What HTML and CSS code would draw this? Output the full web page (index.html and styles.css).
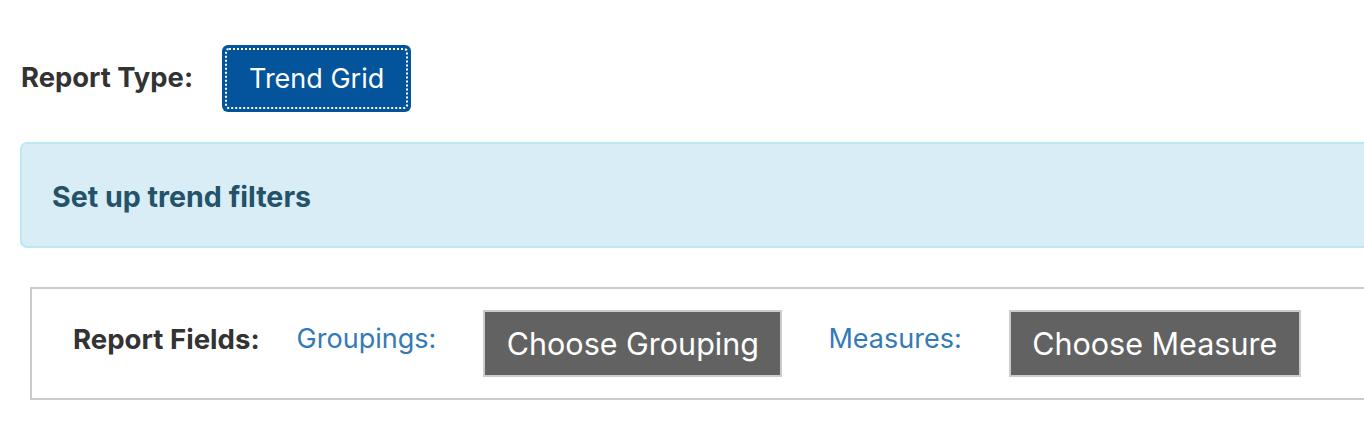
FILE: index.html
```html
<!DOCTYPE html>
<html lang="en">
<head>
<meta charset="utf-8">
<title>Report</title>
<link rel="stylesheet" href="styles.css">
</head>
<body>
<div class="page">
  <div class="type-row">
    <span class="type-label">Report Type:</span>
    <button class="type-btn"><span class="focus-ring">Trend Grid</span></button>
  </div>
  <div class="alert">
    <h3 class="alert-title">Set up trend filters</h3>
  </div>
  <div class="fields-panel">
    <span class="fields-label">Report Fields:</span>
    <a class="field-link" href="#">Groupings:</a>
    <button class="choose-btn">Choose Grouping</button>
    <a class="field-link" href="#">Measures:</a>
    <button class="choose-btn">Choose Measure</button>
  </div>
</div>
</body>
</html>
```

FILE: styles.css
```css
html, body {
  margin: 0;
  padding: 0;
  overflow: hidden;
  background: #fff;
}
body {
  font-family: Inter, "Liberation Sans", sans-serif;
  color: #333;
}
.page {
  padding: 45px 0 0 20px;
  width: 1420px;
}
.type-row {
  display: flex;
  align-items: center;
}
.type-label {
  font-size: 27.4px;
  font-weight: 700;
  color: #333;
  padding-left: 1px;
  padding-bottom: 4px;
  width: 201px;
}
.type-btn {
  height: 67px;
  padding: 3px;
  border: 0;
  border-radius: 6px;
  background: #03549a;
  font-family: inherit;
  display: flex;
}
.focus-ring {
  display: flex;
  align-items: center;
  padding: 0 22px;
  border: 2px dotted #fff;
  border-radius: 4px;
  color: #fff;
  font-size: 27px;
  font-weight: 400;
}
.alert {
  margin-top: 30px;
  height: 102px;
  background: #d9edf7;
  border: 2px solid #bce8f1;
  border-radius: 7px;
  display: flex;
  align-items: center;
  padding-left: 30px;
}
.alert-title {
  margin: 0;
  padding-top: 3px;
  font-size: 28.6px;
  font-weight: 700;
  color: #245269;
}
.fields-panel {
  margin: 39px 0 0 10px;
  height: 109px;
  border: 2px solid #ccc;
  display: flex;
  align-items: center;
  padding-left: 41px;
}
.fields-label {
  font-size: 27.6px;
  font-weight: 700;
  color: #333;
  margin-right: 37px;
  padding-bottom: 10px;
}
.field-link {
  font-size: 27px;
  color: #337ab7;
  text-decoration: none;
  margin-right: 47px;
  padding-bottom: 10px;
}
.choose-btn {
  height: 67px;
  padding: 0 21.5px;
  border: 2px solid #ccc;
  background: #626262;
  color: #fff;
  font-family: inherit;
  font-size: 30.5px;
  margin-right: 46px;
}
```
